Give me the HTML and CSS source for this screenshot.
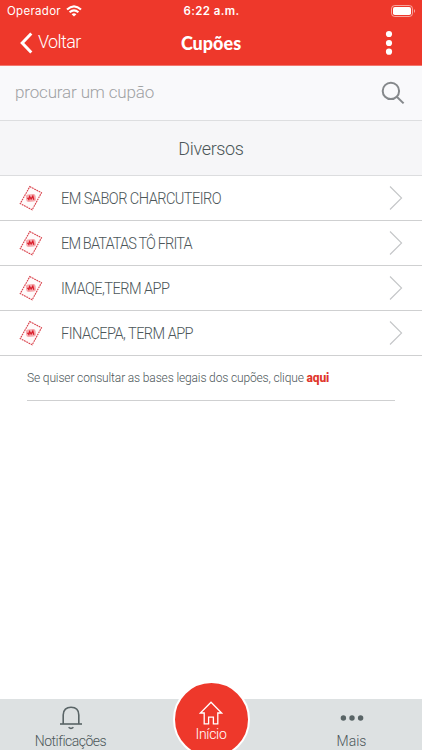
FILE: index.html
```html
<!DOCTYPE html>
<html lang="pt">
<head>
    <meta charset="UTF-8">
    <meta name="viewport" content="width=device-width, initial-scale=1.0">
    <title>Cupões</title>
    <link rel="stylesheet" href="styles.css">
</head>
<body>

    <!-- Shared icons -->
    <svg class="sprite" width="0" height="0">
        <symbol id="coupon" viewBox="0 0 24 26">
            <path d="M10.8 1.6 L22.5 7.7 L13.2 24.8 L1.2 18.6 Z" fill="#fffafa" stroke="#d9404a" stroke-width="1.1" stroke-dasharray="1.8 .7"/>
            <g transform="rotate(-6 12 13)">
                <rect x="7" y="9.2" width="9.8" height="7.6" rx="2.6" fill="#f6a9ad"/>
                <path d="M9.4 15 L10.8 11.4 L12 14 L14 11.4 L14.6 15 M8.2 13 H10" fill="none" stroke="#d91f2c" stroke-width="1.3"/>
            </g>
        </symbol>
        <symbol id="chevron" viewBox="0 0 14 26">
            <path d="M1 1.5 L12.6 13 L1 24.5" fill="none" stroke="#c4c6c8" stroke-width="1.1"/>
        </symbol>
    </svg>

    <div class="app">
        <header class="header">
            <div class="status">
                <div class="carrier">
                    <span class="carrier-name">Operador</span>
                    <svg width="16" height="12" viewBox="0 0 16 12" fill="none" stroke="#fff" stroke-width="2.1">
                        <path d="M1 4.6 Q8 -1.8 15 4.6"/>
                        <path d="M3.6 7.3 Q8 3.3 12.4 7.3"/>
                        <path d="M8 11.6 L5.6 9.2 Q8 7.2 10.4 9.2 Z" fill="#fff" stroke="none"/>
                    </svg>
                </div>
                <span class="clock">6:22 a.m.</span>
                <svg class="battery" width="25" height="12" viewBox="0 0 25 12">
                    <rect x=".5" y=".5" width="21" height="11" rx="3.2" fill="none" stroke="#fff" stroke-opacity=".55"/>
                    <rect x="2" y="2" width="18" height="8" rx="1.8" fill="#fff"/>
                    <path d="M23 4 Q25 6 23 8 Z" fill="#fff" fill-opacity=".6"/>
                </svg>
            </div>
            <nav class="nav">
                <a class="back">
                    <svg width="13" height="22" viewBox="0 0 13 22">
                        <path d="M11.3 1.5 L2.2 11 L11.3 20.5" fill="none" stroke="#fff" stroke-width="3"/>
                    </svg>
                    <span class="back-text">Voltar</span>
                </a>
                <h1 class="title">Cupões</h1>
                <svg class="more" width="8" height="26" viewBox="0 0 8 26" fill="#fff">
                    <circle cx="4" cy="4" r="3.1"/>
                    <circle cx="4" cy="13" r="3.1"/>
                    <circle cx="4" cy="21.7" r="3.1"/>
                </svg>
            </nav>
        </header>

        <div class="search">
            <span class="search-text">procurar um cupão</span>
            <svg width="24" height="24" viewBox="0 0 24 24" fill="none" stroke="#85888b" stroke-width="2">
                <circle cx="9.9" cy="9.9" r="8.2"/>
                <path d="M15.8 15.8 L22.6 22.4"/>
            </svg>
        </div>

        <h2 class="section">Diversos</h2>

        <ul class="list">
            <li class="row">
                <svg class="coupon"><use href="#coupon"/></svg>
                <span class="name">EM SABOR CHARCUTEIRO</span>
                <svg class="chevron"><use href="#chevron"/></svg>
            </li>
            <li class="row">
                <svg class="coupon"><use href="#coupon"/></svg>
                <span class="name tight">EM BATATAS TÔ FRITA</span>
                <svg class="chevron"><use href="#chevron"/></svg>
            </li>
            <li class="row">
                <svg class="coupon"><use href="#coupon"/></svg>
                <span class="name">IMAQE,TERM APP</span>
                <svg class="chevron"><use href="#chevron"/></svg>
            </li>
            <li class="row">
                <svg class="coupon"><use href="#coupon"/></svg>
                <span class="name">FINACEPA, TERM APP</span>
                <svg class="chevron"><use href="#chevron"/></svg>
            </li>
        </ul>

        <p class="legal">Se quiser consultar as bases legais dos cupões, clique <a class="link">aqui</a></p>

        <footer class="tabs">
            <a class="tab">
                <svg width="24" height="24" viewBox="0 0 24 24" fill="none" stroke="#596466" stroke-width="1.6">
                    <path d="M1 18 H23"/>
                    <path d="M4.2 18 V9 C4.2 3.8 7.5 1.2 12 1.2 C16.5 1.2 19.8 3.8 19.8 9 V18"/>
                    <path d="M9.6 21.2 Q12 23.6 14.4 21.2"/>
                </svg>
                <span class="tab-text">Notificações</span>
            </a>
            <a class="home">
                <svg width="24" height="24" viewBox="0 0 24 24" fill="none" stroke="#fff" stroke-width="1.3">
                    <path d="M12 1.2 L1.4 12 H5.2 V22.8 H9.6 V16.2 H14.4 V22.8 H18.8 V12 H22.6 Z"/>
                </svg>
                <span class="home-text">Início</span>
            </a>
            <a class="tab">
                <svg width="24" height="24" viewBox="0 0 24 24" fill="#596466">
                    <circle cx="3.4" cy="12" r="2.7"/>
                    <circle cx="12" cy="12" r="2.7"/>
                    <circle cx="20.6" cy="12" r="2.7"/>
                </svg>
                <span>Mais</span>
            </a>
        </footer>
    </div>

</body>
</html>
```
FILE: styles.css
```css
* {
    box-sizing: border-box;
}
body {
    margin: 0;
    font-family: Roboto, "Liberation Sans", sans-serif;
    font-weight: 300;
    background-color: #fff;
    color: #4c5659;
}
svg {
    display: block;
    flex: none;
}
.sprite {
    display: none;
}
.app {
    display: flex;
    flex-direction: column;
    height: 750px;
    overflow: hidden;
}
.header {
    height: 66px;
    flex: none;
    background-color: #ee382b;
    border-bottom: 1px solid #f3776e;
    color: #fff;
}
.status {
    display: grid;
    grid-template-columns: 1fr auto 1fr;
    align-items: center;
    height: 21px;
    padding: 0 6px 0 7px;
    font-family: Inter, "Liberation Sans", sans-serif;
    font-size: 11.5px;
    font-weight: 400;
}
.carrier {
    display: flex;
    align-items: center;
    gap: 5px;
}
.carrier-name {
    letter-spacing: 0.3px;
}
.clock {
    font-weight: 600;
    letter-spacing: 0.4px;
}
.battery {
    justify-self: end;
}
.nav {
    display: grid;
    grid-template-columns: 1fr auto 1fr;
    align-items: center;
    height: 44px;
    padding: 0 29px 0 20px;
}
.back {
    display: flex;
    align-items: center;
    gap: 5px;
    font-size: 18px;
    line-height: 22px;
}
.back-text {
    padding-bottom: 2px;
    letter-spacing: -0.6px;
}
.title {
    margin: 0;
    padding-left: 9px;
    font-family: Lato, "Liberation Sans", sans-serif;
    font-size: 18px;
    font-weight: 900;
}
.more {
    justify-self: end;
}
.search {
    display: flex;
    align-items: center;
    justify-content: space-between;
    height: 55px;
    flex: none;
    padding: 0 17px 0 15px;
    background-color: #f9f9fb;
    border-bottom: 1px solid #dddee0;
}
.search-text {
    padding-bottom: 2px;
    font-size: 17px;
    letter-spacing: -0.15px;
    color: #a0a2a4;
}
.section {
    margin: 0;
    height: 55px;
    flex: none;
    background-color: #f6f6f8;
    border-bottom: 1px solid #dcdddf;
    font-size: 18px;
    font-weight: 300;
    letter-spacing: -0.35px;
    line-height: 55px;
    text-align: center;
}
.list {
    margin: 0;
    padding: 0;
    list-style: none;
}
.row {
    display: flex;
    align-items: center;
    height: 44.9px;
    padding: 0 19px;
    border-bottom: 1px solid #cfd0d1;
}
.coupon {
    width: 24px;
    height: 26px;
}
.name {
    flex: 1;
    margin-left: 18px;
    padding-top: 2px;
    font-size: 16px;
    letter-spacing: -0.6px;
    white-space: nowrap;
    transform: scaleX(0.91);
    transform-origin: left;
}
.tight {
    letter-spacing: -0.95px;
}
.chevron {
    width: 14px;
    height: 26px;
}
.legal {
    margin: 0 27px;
    height: 45px;
    border-bottom: 1px solid #cfd0d1;
    font-size: 12px;
    letter-spacing: -0.14px;
    line-height: 45px;
    white-space: nowrap;
}
.link {
    color: #e0352b;
    font-weight: 800;
}
.tabs {
    display: flex;
    justify-content: space-between;
    height: 51px;
    flex: none;
    margin-top: auto;
    background-color: #dde1e2;
    font-size: 14px;
    line-height: 18px;
}
.tab {
    display: flex;
    flex-direction: column;
    align-items: center;
    gap: 2px;
    width: 141px;
    padding-top: 7px;
}
.tab-text {
    letter-spacing: -0.5px;
}
.home {
    display: flex;
    flex-direction: column;
    align-items: center;
    flex: none;
    width: 77px;
    height: 77px;
    margin-top: -18px;
    padding-top: 18px;
    border: 2.5px solid #fff;
    border-radius: 50%;
    background-color: #ee382b;
    color: #fff;
}
.home-text {
    letter-spacing: -0.3px;
}
```
